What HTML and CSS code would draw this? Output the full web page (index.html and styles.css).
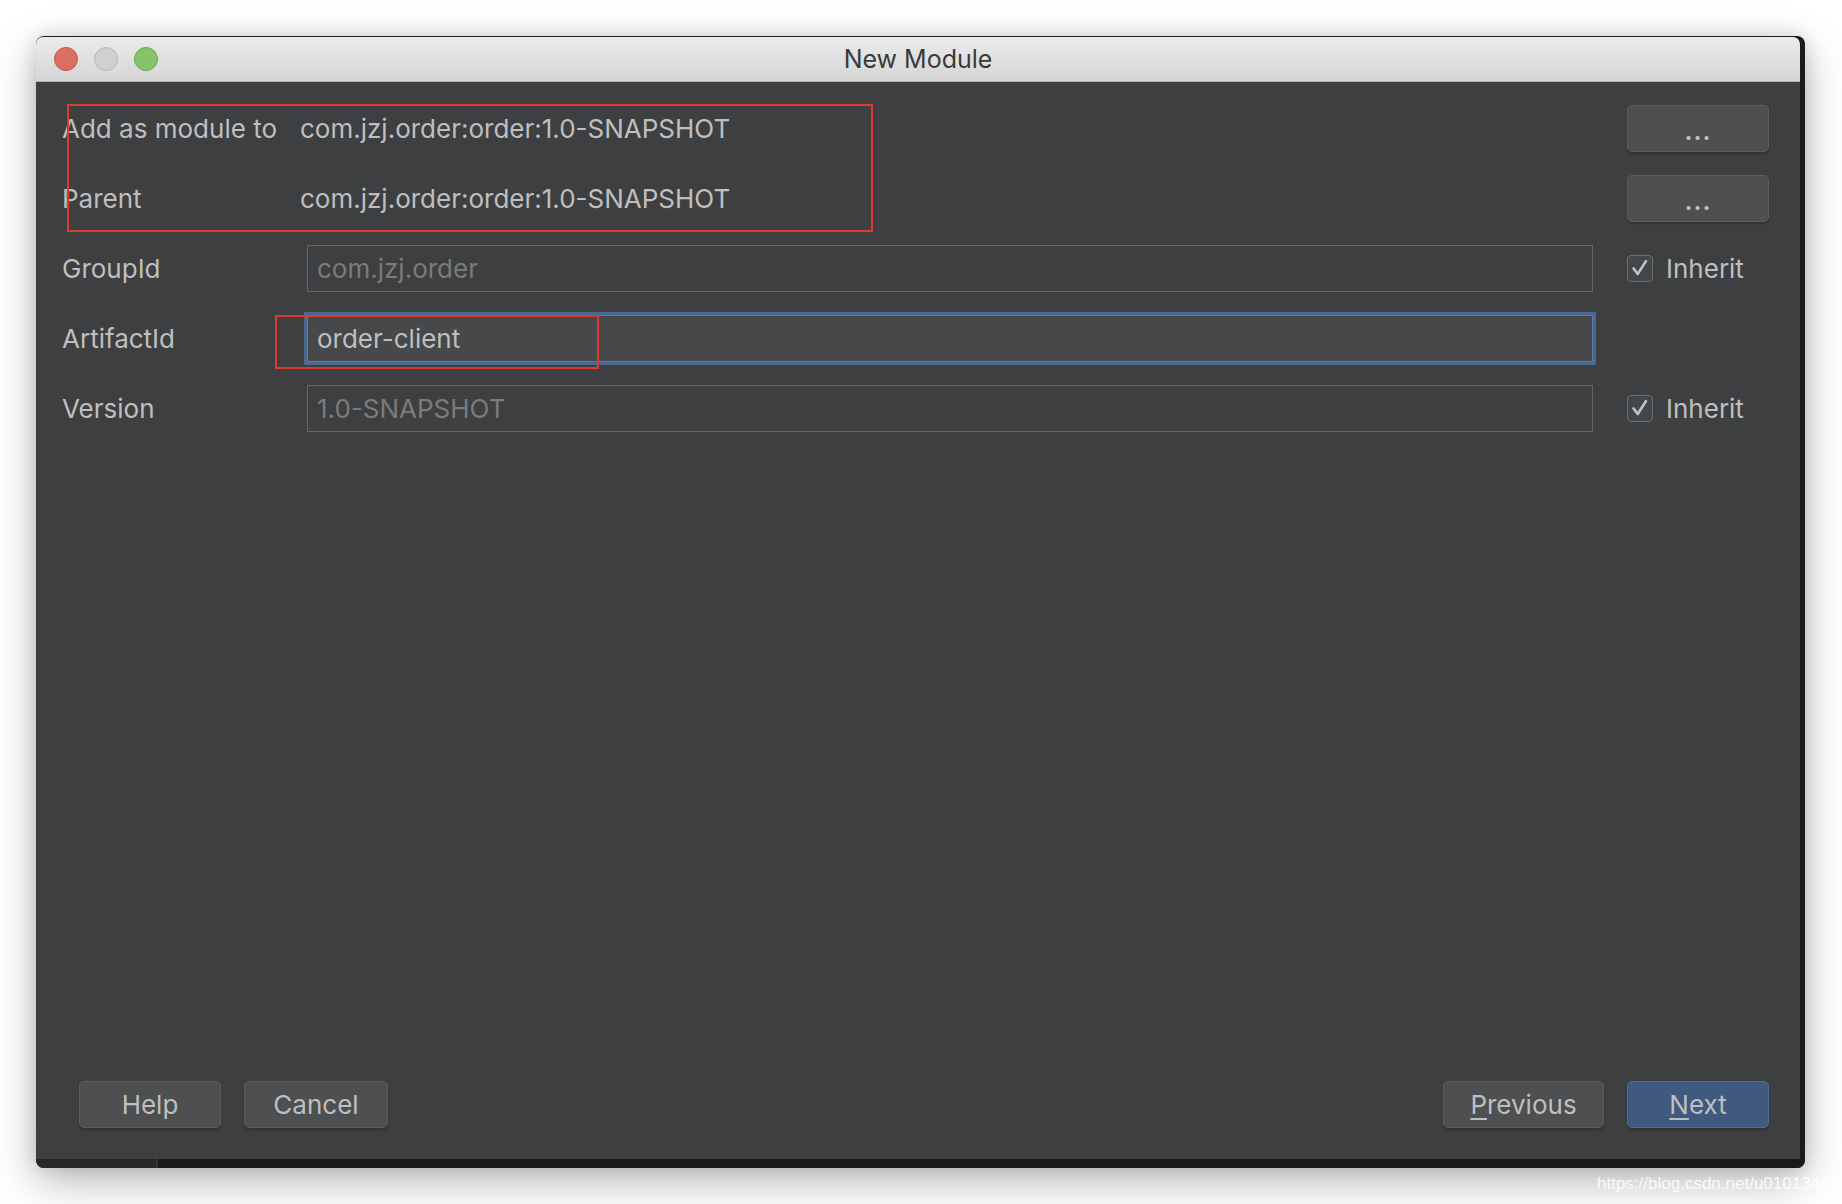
FILE: index.html
```html
<!DOCTYPE html>
<html>
<head>
<meta charset="utf-8">
<title>New Module</title>
<link rel="stylesheet" href="styles.css">
</head>
<body>
<div class="stage">
  <div class="frame">
    <div class="dialog">
      <div class="titlebar">
        <div class="lights">
          <span class="light red"></span>
          <span class="light gray"></span>
          <span class="light green"></span>
        </div>
        <div class="title">New Module</div>
      </div>
      <div class="content">
        <div class="form">
          <div class="label">Add as module to</div>
          <div class="value">com.jzj.order:order:1.0-SNAPSHOT</div>
          <div class="side"><button class="btn dots">...</button></div>

          <div class="label">Parent</div>
          <div class="value">com.jzj.order:order:1.0-SNAPSHOT</div>
          <div class="side"><button class="btn dots">...</button></div>

          <div class="label">GroupId</div>
          <div class="field disabled">com.jzj.order</div>
          <div class="side"><span class="check"><svg viewBox="0 0 24 24" width="22" height="22"><path d="M5 12.5 L9.5 18.5 L18.5 4.5" fill="none" stroke="#c4c4c4" stroke-width="2.8" stroke-linecap="round" stroke-linejoin="round"/></svg></span><span class="inherit">Inherit</span></div>

          <div class="label">ArtifactId</div>
          <div class="field focused">order-client</div>
          <div class="side"></div>

          <div class="label">Version</div>
          <div class="field disabled">1.0-SNAPSHOT</div>
          <div class="side"><span class="check"><svg viewBox="0 0 24 24" width="22" height="22"><path d="M5 12.5 L9.5 18.5 L18.5 4.5" fill="none" stroke="#c4c4c4" stroke-width="2.8" stroke-linecap="round" stroke-linejoin="round"/></svg></span><span class="inherit">Inherit</span></div>
        </div>
        <div class="footer">
          <div class="group">
            <button class="btn wide">Help</button>
            <button class="btn cancel">Cancel</button>
          </div>
          <div class="group">
            <button class="btn prev"><u>P</u>revious</button>
            <button class="btn wide next"><u>N</u>ext</button>
          </div>
        </div>
        <div class="mark mark-top"></div>
        <div class="mark mark-artifact"></div>
      </div>
    </div>
    <div class="strip"><span class="strip-left"></span><span class="strip-right"></span></div>
  </div>
  <div class="watermark">https://blog.csdn.net/u0101346</div>
</div>
</body>
</html>
```

FILE: styles.css
```css
html, body {
  margin: 0;
  padding: 0;
  background: #ffffff;
  overflow: hidden;
}

.stage {
  position: relative;
  width: 1842px;
  height: 1204px;
  padding: 36px 0 0 36px;
  box-sizing: border-box;
  font-family: "Inter", "Helvetica Neue", "Liberation Sans", sans-serif;
}

.frame {
  width: 1769px;
  background: #1b1b1b;
  border-radius: 8px;
  padding-top: 1px;
  box-shadow: 0 14px 44px rgba(0, 0, 0, 0.28), 0 0 18px rgba(0, 0, 0, 0.12);
  display: flex;
  flex-direction: column;
}

.dialog {
  width: 1764px;
  display: flex;
  flex-direction: column;
  border-radius: 7px 7px 0 0;
  overflow: hidden;
}

.titlebar {
  height: 44px;
  border-bottom: 1px solid #b3b3b3;
  background: linear-gradient(#ebebeb, #d5d5d5);
  display: flex;
  align-items: center;
  position: relative;
}

.lights {
  display: flex;
  gap: 16px;
  padding-left: 18px;
}

.light {
  width: 24px;
  height: 24px;
  border-radius: 50%;
  box-sizing: border-box;
}
.light.red { background: #dc6f63; border: 1px solid #c45548; }
.light.gray { background: #d0d0d0; border: 1px solid #b9b9b9; }
.light.green { background: #85c46b; border: 1px solid #6aa552; }

.title {
  position: absolute;
  left: 0;
  right: 0;
  text-align: center;
  font-size: 25px;
  color: #3a3a3a;
}

.content {
  position: relative;
  height: 1077px;
  background: #3e3f41;
  display: flex;
  flex-direction: column;
  justify-content: space-between;
}

.form {
  display: grid;
  grid-template-columns: 238px 1294px 175px;
  grid-auto-rows: 70px;
  align-items: center;
  padding: 11px 31px 0 26px;
}

.label,
.value {
  color: #bfbfbf;
  font-size: 26px;
}

.field {
  height: 47px;
  box-sizing: border-box;
  margin: 0 1px 0 7px;
  border: 1px solid #646464;
  display: flex;
  align-items: center;
  padding-left: 9px;
  font-size: 26px;
}

.field.disabled {
  color: #7b7b7b;
  background: #3e3f41;
}

.field.focused {
  color: #bfbfbf;
  background: #46484a;
  border-color: #5d7ca3;
  box-shadow: 0 0 0 3px #4a6990;
}

.side {
  display: flex;
  align-items: center;
  height: 100%;
  padding-left: 33px;
}

.check {
  width: 26px;
  height: 27px;
  box-sizing: border-box;
  border: 1px solid #6b6d6e;
  border-radius: 4px;
  background: #444749;
  display: flex;
  align-items: center;
  justify-content: center;
}

.inherit {
  color: #bfbfbf;
  font-size: 26px;
  margin-left: 13px;
}

.btn {
  font-family: inherit;
  height: 47px;
  box-sizing: border-box;
  border: 1px solid #5b5e60;
  border-radius: 5px;
  background: #4d4f51;
  color: #bfbfbf;
  font-size: 26px;
  padding: 0;
  box-shadow: 0 2px 2px rgba(0, 0, 0, 0.22);
}

.btn u {
  text-decoration-thickness: 2px;
  text-underline-offset: 4px;
}

.dots {
  width: 142px;
  padding-top: 6px;
  font-size: 24px;
  font-weight: 700;
  letter-spacing: 1px;
}

.footer {
  display: flex;
  justify-content: space-between;
  padding: 0 31px 31px 43px;
}

.group {
  display: flex;
  gap: 23px;
}

.wide { width: 142px; }
.cancel { width: 144px; }
.prev { width: 161px; }

.next {
  background: #3f5a7e;
  border-color: #4f6e95;
}

.mark {
  position: absolute;
  border: 2px solid #db3a2c;
  box-sizing: border-box;
  pointer-events: none;
}

.mark-top {
  left: 31px;
  top: 22px;
  width: 806px;
  height: 128px;
}

.mark-artifact {
  left: 239px;
  top: 233px;
  width: 324px;
  height: 54px;
}

.strip {
  height: 9px;
  display: flex;
  border-radius: 0 0 8px 8px;
  overflow: hidden;
}

.strip-left {
  width: 120px;
  background: #27282a;
  border-right: 2px solid #333436;
}

.strip-right {
  flex: 1;
  background: #1a1a1a;
}

.watermark {
  position: absolute;
  left: 1597px;
  top: 1174px;
  font-family: "Liberation Sans", sans-serif;
  font-size: 17px;
  color: rgba(255, 255, 255, 0.85);
  white-space: nowrap;
}
```
